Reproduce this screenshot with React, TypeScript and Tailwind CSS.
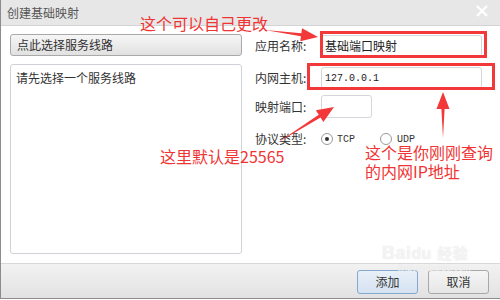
import React from "react";

const cjk = { fontFamily: '"Noto Sans CJK SC", "Liberation Sans", sans-serif' };
const mono = { fontFamily: '"Liberation Mono", "Noto Sans CJK SC", monospace' };

function arrow(x1: number, y1: number, x2: number, y2: number, head = 16, wing = 7, shaft = 1.6) {
  const dx = x2 - x1;
  const dy = y2 - y1;
  const len = Math.hypot(dx, dy);
  const ux = dx / len;
  const uy = dy / len;
  const nx = -uy;
  const ny = ux;
  const bx = x2 - ux * head;
  const by = y2 - uy * head;
  const pts = [
    [x1, y1],
    [bx + nx * shaft, by + ny * shaft],
    [bx + nx * wing, by + ny * wing],
    [x2, y2],
    [bx - nx * wing, by - ny * wing],
    [bx - nx * shaft, by - ny * shaft],
  ];
  return pts.map((p) => p.join(",")).join(" ");
}

function Field({ label, children, className }: { label: string; children: React.ReactNode; className?: string }) {
  return (
    <div className={`flex items-center ${className ?? ""}`}>
      <span className="w-[66px] text-[12px] text-[#333]">{label}</span>
      {children}
    </div>
  );
}

export default function App() {
  return (
    <div style={cjk} className="relative w-[500px] h-[300px] bg-white overflow-hidden">
      <div className="flex flex-col h-[299px] border-l border-b border-[#8c8c8c]">
        {/* title bar */}
        <div className="flex items-center justify-between h-[26px] px-[6px] bg-[#e7e7e7] border-b border-[#d4d4d4]">
          <span className="text-[12px] text-[#555]">创建基础映射</span>
          <svg width="12" height="12" viewBox="0 0 12 12" className="mr-[6px] mb-[4px]">
            <path d="M1 1 L11 11 M11 1 L1 11" stroke="white" strokeWidth="2.2" />
          </svg>
        </div>

        {/* body */}
        <div className="flex flex-1 px-[9px] pt-[8px]">
          <div className="flex flex-col w-[232px] gap-[8px]">
            <button className="h-[22px] text-left px-[6px] text-[12px] text-[#333] rounded-[3px] border border-[#a9a9a9] bg-gradient-to-b from-[#f6f6f6] to-[#e1e1e1]">
              点此选择服务线路
            </button>
            <div className="h-[190px] rounded-[3px] border border-[#cfd3d9] px-[5px] py-[4px] text-[12px] text-[#333]">
              请先选择一个服务线路
            </div>
          </div>

          <div className="flex flex-col ml-[13px] pt-[1px]">
            <Field label="应用名称:">
              <div className="w-[161px] h-[22px] rounded-[3px] border border-[#d3d6db] flex items-center px-[3px] text-[12px] text-[#222]">
                基础端口映射
              </div>
            </Field>
            <Field label="内网主机:" className="mt-[10px]">
              <div style={mono} className="w-[161px] h-[22px] rounded-[3px] border border-[#d3d6db] flex items-center px-[3px] text-[10px] text-[#222]">
                127.0.0.1
              </div>
            </Field>
            <Field label="映射端口:" className="mt-[6px]">
              <div className="w-[51px] h-[23px] rounded-[3px] border border-[#d3d6db]" />
            </Field>
            <Field label="协议类型:" className="mt-[12px]">
              <div className="flex items-center">
                <span className="w-[12px] h-[12px] rounded-full border border-[#999] bg-white flex items-center justify-center">
                  <span className="w-[4px] h-[4px] rounded-full bg-[#333]" />
                </span>
                <span style={mono} className="ml-[4px] text-[10px] text-[#333]">TCP</span>
                <span className="ml-[25px] w-[12px] h-[12px] rounded-full border border-[#999] bg-white" />
                <span style={mono} className="ml-[5px] text-[10px] text-[#333]">UDP</span>
              </div>
            </Field>
          </div>
        </div>

        {/* footer */}
        <div className="relative flex justify-end items-center gap-[10px] h-[35px] pr-[11px] pt-[2px] border-t border-[#d8d8d8] bg-gradient-to-b from-[#f2f2f2] to-[#e2e2e2]">
          <button className="w-[61px] h-[24px] text-[12px] text-[#333] rounded-[3px] border border-[#86a8cf] bg-gradient-to-b from-[#e8f0f9] to-[#d5e2f1]">
            添加
          </button>
          <button className="w-[61px] h-[24px] text-[12px] text-[#333] rounded-[3px] border border-[#a8a8a8] bg-gradient-to-b from-[#f5f5f5] to-[#e6e6e6]">
            取消
          </button>
        </div>
      </div>

      {/* watermark */}
      <div className="absolute left-[382px] top-[244px] pointer-events-none text-white/70 [text-shadow:0_0_1px_#d8d8d8]">
        <div style={{ fontFamily: '"Liberation Sans", sans-serif' }} className="text-[18px] font-bold leading-none tracking-wide">
          Bai<span className="text-[16px]">du</span> <span style={cjk} className="text-[15px]">经验</span>
        </div>
        <div style={{ fontFamily: '"Liberation Sans", sans-serif' }} className="text-[9px] leading-none mt-[2px] ml-[16px]">
          jingyan.baidu.com
        </div>
      </div>

      {/* annotations */}
      <div className="absolute left-[320px] top-[31px] w-[167px] h-[27px] border-[3px] border-[#f23838] pointer-events-none" />
      <div className="absolute left-[307px] top-[63px] w-[188px] h-[27px] border-[3px] border-[#f23838] pointer-events-none" />

      <span className="absolute left-[140px] top-[15px] text-[16px] leading-none text-[#f03434]">这个可以自己更改</span>
      <span className="absolute left-[160px] top-[148px] text-[16px] leading-none text-[#f03434]">这里默认是25565</span>
      <span className="absolute left-[365px] top-[143px] text-[16px] leading-[19px] text-[#f03434]">
        这个是你刚刚查询
        <br />
        的内网IP地址
      </span>

      <svg className="absolute inset-0 pointer-events-none" width="500" height="300">
        <polygon points={arrow(265, 30, 318, 37, 17, 6.5, 1.6)} fill="#f23838" />
        <polygon points={arrow(277, 143, 334, 107, 17, 7, 1.7)} fill="#f23838" />
        <polygon points={arrow(443, 138, 443, 92, 17, 6.5, 1.6)} fill="#f23838" />
      </svg>
    </div>
  );
}
